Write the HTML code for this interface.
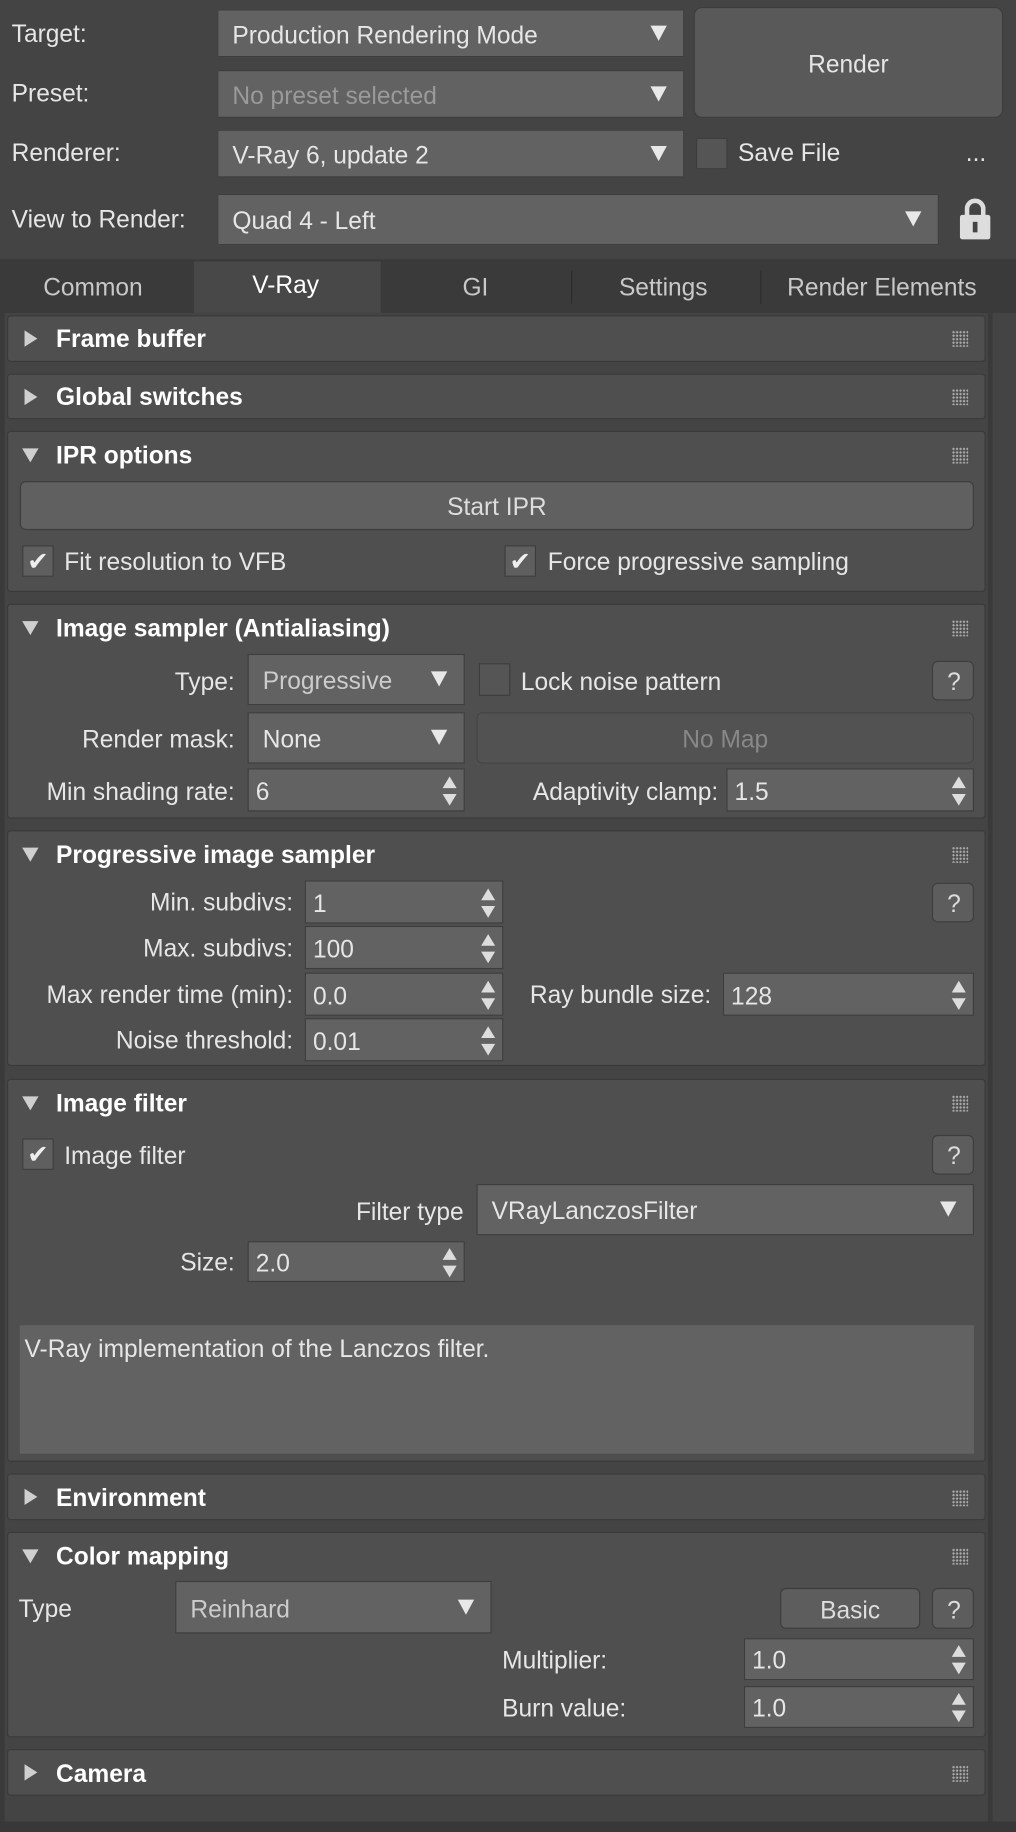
<!DOCTYPE html>
<html><head><meta charset="utf-8"><style>
html,body{margin:0;padding:0;background:#444;overflow:hidden;width:1016px;height:1832px}
#w{position:absolute;left:0;top:0;width:870px;height:1569px;transform:scale(1.16782,1.1676);transform-origin:0 0;background:#444;font-family:"Liberation Sans",sans-serif;font-size:21px;color:#e6e6e6}
#w div{position:absolute;box-sizing:border-box}
.t{white-space:nowrap;line-height:1}
.dd{background:#626262;border:1px solid #3d3d3d}
.dd .t{left:12px;top:50%;transform:translateY(-42%)}
.arr{width:0;height:0;border-left:7px solid transparent;border-right:7px solid transparent;border-top:13px solid #e8e8e8;top:50%;margin-top:-7px}
.sp{background:#626262;border:1px solid #3d3d3d}
.sp .t{left:6px;top:50%;transform:translateY(-42%)}
.up{right:6px;top:50%;margin-top:-12px;width:0;height:0;border-left:6px solid transparent;border-right:6px solid transparent;border-bottom:10px solid #ddd}
.dn{right:6px;top:50%;margin-top:3px;width:0;height:0;border-left:6px solid transparent;border-right:6px solid transparent;border-top:10px solid #ddd}
.pn{background:#4f4f4f;border:1px solid #3a3a3a;border-radius:3px;left:6px;width:838px}
.h{font-weight:bold;left:41px;color:#fff}
.tr{width:0;height:0;border-top:7px solid transparent;border-bottom:7px solid transparent;border-left:11px solid #cfcfcf;left:14px}
.td{width:0;height:0;border-left:7px solid transparent;border-right:7px solid transparent;border-top:12px solid #cfcfcf;left:12px}
.grip{right:14px;width:14px;height:14px;background-image:radial-gradient(#aaa 0.9px,transparent 1.1px);background-size:3px 3px}
.btn{background:#5d5d5d;border:1px solid #3d3d3d;border-radius:5px}
.cb{width:27px;height:27px;background:#5f5f5f;border:1px solid #3d3d3d}
.r{text-align:right}
</style></head><body><div id="w">
<div class="t" style="left:10px;top:19px">Target:</div>
<div class="dd" style="left:186px;top:8px;width:400px;height:41px"><div class="t">Production Rendering Mode</div><div class="arr" style="right:14px"></div></div>
<div class="t" style="left:10px;top:70px">Preset:</div>
<div class="dd" style="left:186px;top:60px;width:400px;height:41px"><div class="t" style="color:#9a9a9a">No preset selected</div><div class="arr" style="right:14px"></div></div>
<div class="t" style="left:10px;top:121px">Renderer:</div>
<div class="dd" style="left:186px;top:111px;width:400px;height:41px"><div class="t">V-Ray 6, update 2</div><div class="arr" style="right:14px"></div></div>
<div class="btn" style="left:594px;top:6px;width:265px;height:95px;border-radius:7px;background:#595959"><div class="t" style="left:0;width:100%;text-align:center;top:38px">Render</div></div>
<div class="cb" style="left:596px;top:118px;background:#555"></div>
<div class="t" style="left:632px;top:121px">Save File</div>
<div class="t" style="left:827px;top:121px">...</div>
<div class="t" style="left:10px;top:178px">View to Render:</div>
<div class="dd" style="left:186px;top:166px;width:618px;height:44px"><div class="t">Quad 4 - Left</div><div class="arr" style="right:14px"></div></div>
<div style="left:826px;top:170px;width:18px;height:18px;border:4px solid #ddd;border-bottom:none;border-radius:9px 9px 0 0"></div>
<div style="left:822px;top:184px;width:26px;height:21px;background:#ddd;border-radius:2px"></div>
<div style="left:833px;top:190px;width:4px;height:9px;background:#444"></div>
<div style="left:0;top:222px;width:870px;height:46px;background:#3a3a3a"></div>
<div style="left:166px;top:224px;width:160px;height:44px;background:#484848"></div>
<div class="t" style="left:37px;top:236px;color:#c8c8c8">Common</div>
<div class="t" style="left:216px;top:234px;color:#fff">V-Ray</div>
<div class="t" style="left:396px;top:236px;color:#c8c8c8">GI</div>
<div class="t" style="left:530px;top:236px;color:#c8c8c8">Settings</div>
<div class="t" style="left:674px;top:236px;color:#c8c8c8">Render Elements</div>
<div style="left:489px;top:232px;width:1px;height:28px;background:#2c2c2c"></div>
<div style="left:651px;top:232px;width:1px;height:28px;background:#2c2c2c"></div>
<div style="left:846px;top:268px;width:4px;height:1301px;background:#3a3a3a"></div>
<div style="left:0;top:222px;width:4px;height:1347px;background:#3a3a3a"></div>

<div class="pn" style="top:270px;height:40px"><div class="tr" style="top:12px"></div><div class="t h" style="top:9px">Frame buffer</div><div class="grip" style="top:12px"></div></div>
<div class="pn" style="top:320px;height:39px"><div class="tr" style="top:12px"></div><div class="t h" style="top:9px">Global switches</div><div class="grip" style="top:12px"></div></div>
<div class="pn" style="top:369px;height:138px">
<div class="td" style="top:14px"></div><div class="t h" style="top:10px">IPR options</div><div class="grip" style="top:13px"></div>
<div class="btn" style="left:10px;top:42px;width:817px;height:42px;background:#606060"><div class="t" style="width:100%;text-align:center;top:11px;color:#ddd">Start IPR</div></div>
<div class="cb" style="left:12px;top:97px;color:#eee;font-size:22px;text-align:center;line-height:26px">✔</div>
<div class="t" style="left:48px;top:101px">Fit resolution to VFB</div>
<div class="cb" style="left:425px;top:97px;color:#eee;font-size:22px;text-align:center;line-height:26px">✔</div>
<div class="t" style="left:462px;top:101px">Force progressive sampling</div>
</div>
<div class="pn" style="top:517px;height:184px">
<div class="td" style="top:14px"></div><div class="t h" style="top:10px">Image sampler (Antialiasing)</div><div class="grip" style="top:13px"></div>
<div class="t r" style="right:642px;top:56px">Type:</div>
<div class="dd" style="left:205px;top:42px;width:186px;height:44px"><div class="t" style="color:#ccc">Progressive</div><div class="arr" style="right:14px"></div></div>
<div class="cb" style="left:403px;top:50px;width:27px;height:28px;background:#555"></div>
<div class="t" style="left:439px;top:56px">Lock noise pattern</div>
<div class="btn" style="left:791px;top:48px;width:36px;height:34px"><div class="t" style="left:12px;top:7px;color:#ddd">?</div></div>
<div class="t r" style="right:642px;top:105px">Render mask:</div>
<div class="dd" style="left:205px;top:92px;width:186px;height:44px"><div class="t">None</div><div class="arr" style="right:14px"></div></div>
<div class="btn" style="left:401px;top:92px;width:426px;height:44px;background:#525252;border-color:#444"><div class="t" style="width:100%;text-align:center;top:12px;color:#888">No Map</div></div>
<div class="t r" style="right:642px;top:150px">Min shading rate:</div>
<div class="sp" style="left:205px;top:140px;width:186px;height:37px"><div class="t">6</div><div class="up"></div><div class="dn"></div></div>
<div class="t r" style="right:228px;top:150px">Adaptivity clamp:</div>
<div class="sp" style="left:615px;top:140px;width:212px;height:37px"><div class="t">1.5</div><div class="up"></div><div class="dn"></div></div>
</div>
<div class="pn" style="top:711px;height:202px">
<div class="td" style="top:14px"></div><div class="t h" style="top:10px">Progressive image sampler</div><div class="grip" style="top:13px"></div>
<div class="btn" style="left:791px;top:44px;width:36px;height:34px"><div class="t" style="left:12px;top:7px;color:#ddd">?</div></div>
<div class="t r" style="right:592px;top:51px">Min. subdivs:</div>
<div class="sp" style="left:254px;top:42px;width:170px;height:37px"><div class="t">1</div><div class="up"></div><div class="dn"></div></div>
<div class="t r" style="right:592px;top:90px">Max. subdivs:</div>
<div class="sp" style="left:254px;top:81px;width:170px;height:37px"><div class="t">100</div><div class="up"></div><div class="dn"></div></div>
<div class="t r" style="right:592px;top:130px">Max render time (min):</div>
<div class="sp" style="left:254px;top:121px;width:170px;height:37px"><div class="t">0.0</div><div class="up"></div><div class="dn"></div></div>
<div class="t r" style="right:234px;top:130px">Ray bundle size:</div>
<div class="sp" style="left:612px;top:121px;width:215px;height:37px"><div class="t">128</div><div class="up"></div><div class="dn"></div></div>
<div class="t r" style="right:592px;top:169px">Noise threshold:</div>
<div class="sp" style="left:254px;top:160px;width:170px;height:37px"><div class="t">0.01</div><div class="up"></div><div class="dn"></div></div>
</div>
<div class="pn" style="top:924px;height:328px">
<div class="td" style="top:14px"></div><div class="t h" style="top:10px">Image filter</div><div class="grip" style="top:13px"></div>
<div class="cb" style="left:12px;top:50px;color:#eee;font-size:22px;text-align:center;line-height:26px">✔</div>
<div class="t" style="left:48px;top:55px">Image filter</div>
<div class="btn" style="left:791px;top:47px;width:36px;height:34px"><div class="t" style="left:12px;top:7px;color:#ddd">?</div></div>
<div class="t r" style="right:446px;top:103px">Filter type</div>
<div class="dd" style="left:401px;top:89px;width:426px;height:44px"><div class="t">VRayLanczosFilter</div><div class="arr" style="right:14px"></div></div>
<div class="t r" style="right:642px;top:146px">Size:</div>
<div class="sp" style="left:205px;top:138px;width:186px;height:35px"><div class="t">2.0</div><div class="up"></div><div class="dn"></div></div>
<div style="left:10px;top:210px;width:817px;height:110px;background:#626262"><div class="t" style="left:4px;top:10px">V-Ray implementation of the Lanczos filter.</div></div>
</div>
<div class="pn" style="top:1262px;height:40px"><div class="tr" style="top:12px"></div><div class="t h" style="top:10px">Environment</div><div class="grip" style="top:13px"></div></div>
<div class="pn" style="top:1312px;height:176px">
<div class="td" style="top:14px"></div><div class="t h" style="top:10px">Color mapping</div><div class="grip" style="top:13px"></div>
<div class="t" style="left:9px;top:55px">Type</div>
<div class="dd" style="left:143px;top:41px;width:271px;height:45px"><div class="t" style="color:#ccc">Reinhard</div><div class="arr" style="right:14px"></div></div>
<div class="btn" style="left:661px;top:47px;width:120px;height:35px"><div class="t" style="width:100%;text-align:center;top:8px;color:#ddd">Basic</div></div>
<div class="btn" style="left:791px;top:47px;width:36px;height:35px"><div class="t" style="left:12px;top:8px;color:#ddd">?</div></div>
<div class="t" style="left:423px;top:99px">Multiplier:</div>
<div class="sp" style="left:630px;top:90px;width:197px;height:36px"><div class="t">1.0</div><div class="up"></div><div class="dn"></div></div>
<div class="t" style="left:423px;top:140px">Burn value:</div>
<div class="sp" style="left:630px;top:131px;width:197px;height:36px"><div class="t">1.0</div><div class="up"></div><div class="dn"></div></div>
</div>
<div class="pn" style="top:1498px;height:40px"><div class="tr" style="top:12px"></div><div class="t h" style="top:10px">Camera</div><div class="grip" style="top:13px"></div></div>
<div style="left:0;top:1560px;width:870px;height:9px;background:#383838"></div>
</div></body></html>
